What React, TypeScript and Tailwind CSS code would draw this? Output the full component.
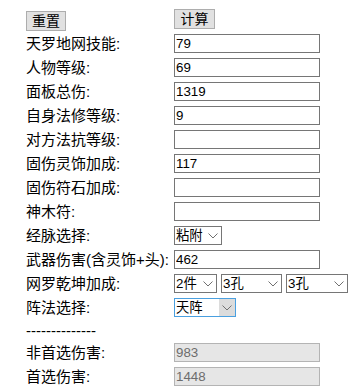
import { useState } from "react";

const font = "font-['Liberation_Sans','Noto_Sans_CJK_SC',sans-serif]";

function Chevron({ className = "" }: { className?: string }) {
  return (
    <svg width="10" height="6" viewBox="0 0 10 6" className={className}>
      <path d="M0.5 0.5 L5 5 L9.5 0.5" fill="none" stroke="#707070" strokeWidth="1" />
    </svg>
  );
}

function Field({ value, disabled }: { value: string; disabled?: boolean }) {
  return (
    <input
      defaultValue={value}
      disabled={disabled}
      className={`h-[19px] w-[146px] px-[1px] text-[13.33px] outline-none border ${
        disabled
          ? "bg-[#e6e6e6] border-[#b4b4b4] text-[#6d6d6d]"
          : "bg-white border-[#767676] text-black"
      }`}
    />
  );
}

function Select({
  value,
  width,
  focused,
}: {
  value: string;
  width: string;
  focused?: boolean;
}) {
  return (
    <div
      className={`relative flex h-[19px] items-center border text-[13.33px] ${width} ${
        focused ? "border-[#4aa0e0]" : "border-[#767676]"
      }`}
    >
      <span className="pl-[1px] leading-none">{value}</span>
      {focused ? (
        <span className="absolute right-0 top-0 flex h-full w-[16px] items-center justify-center bg-[#dcdcdc]">
          <Chevron />
        </span>
      ) : (
        <Chevron className="absolute right-[3px] top-[6px]" />
      )}
    </div>
  );
}

function Row({ label, children }: { label: string; children: React.ReactNode }) {
  return (
    <div className="flex h-[19px] items-center">
      <span className="w-[148px] shrink-0 whitespace-nowrap text-[15px] leading-none">
        {label}
      </span>
      {children}
    </div>
  );
}

export default function App() {
  const [fields] = useState([
    ["天罗地网技能:", "79"],
    ["人物等级:", "69"],
    ["面板总伤:", "1319"],
    ["自身法修等级:", "9"],
    ["对方法抗等级:", ""],
    ["固伤灵饰加成:", "117"],
    ["固伤符石加成:", ""],
    ["神木符:", ""],
  ]);

  return (
    <div className={`${font} min-h-[390px] bg-white pl-[26px] pt-[9px] text-black`}>
      <div className="flex flex-col gap-[5px]">
        <div className="flex h-[20px]">
          <div className="w-[148px]">
            <button className="h-[20px] w-[40px] border border-[#adadad] bg-[#e1e1e1] text-[14px] leading-none">
              重置
            </button>
          </div>
          <button className="h-[20px] w-[41px] border border-[#adadad] bg-[#e1e1e1] text-[14px] leading-none">
            计算
          </button>
        </div>

        {fields.map(([label, value]) => (
          <Row key={label} label={label}>
            <Field value={value} />
          </Row>
        ))}

        <Row label="经脉选择:">
          <Select value="粘附" width="w-[48px]" />
        </Row>
        <Row label="武器伤害(含灵饰+头):">
          <Field value="462" />
        </Row>
        <Row label="网罗乾坤加成:">
          <div className="flex gap-[4px]">
            <Select value="2件" width="w-[43px]" />
            <Select value="3孔" width="w-[61px]" />
            <Select value="3孔" width="w-[62px]" />
          </div>
        </Row>
        <Row label="阵法选择:">
          <Select value="天阵" width="w-[62px]" focused />
        </Row>

        <div className="flex h-[16px] items-center text-[15px] leading-none">--------------</div>

        <Row label="非首选伤害:">
          <Field value="983" disabled />
        </Row>
        <Row label="首选伤害:">
          <Field value="1448" disabled />
        </Row>
      </div>
    </div>
  );
}
